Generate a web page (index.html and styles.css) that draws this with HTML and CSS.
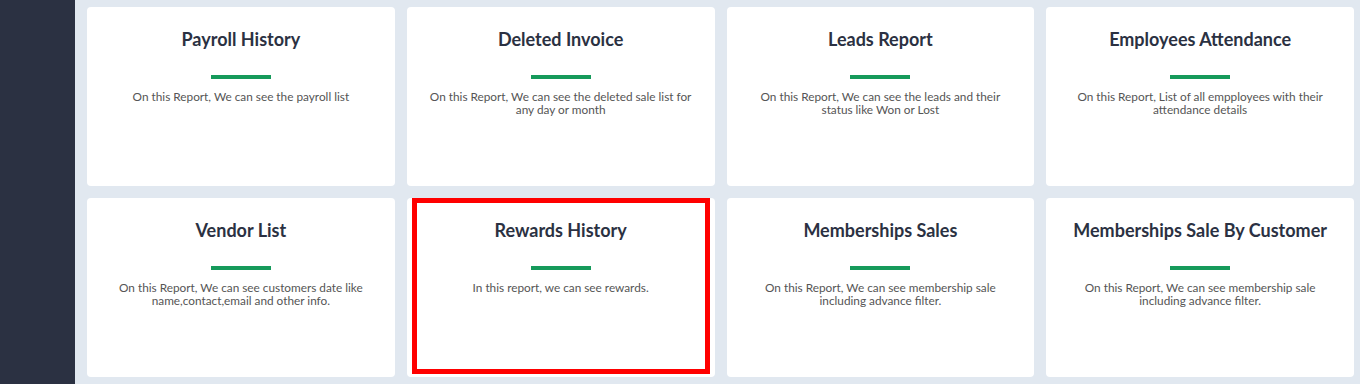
FILE: index.html
```html
<!DOCTYPE html>
<html lang="en">
<head>
    <meta charset="UTF-8">
    <meta name="viewport" content="width=device-width, initial-scale=1.0">
    <title>Reports</title>
    <link rel="stylesheet" href="styles.css">
</head>
<body>
    <div class="layout">
        <aside class="sidebar"></aside>
        <main class="content">
            <div class="report-grid">
                <div class="report-card">
                    <h3>Payroll History</h3>
                    <span class="divider"></span>
                    <p>On this Report, We can see the payroll list</p>
                </div>
                <div class="report-card">
                    <h3>Deleted Invoice</h3>
                    <span class="divider"></span>
                    <p>On this Report, We can see the deleted sale list for any day or month</p>
                </div>
                <div class="report-card">
                    <h3>Leads Report</h3>
                    <span class="divider"></span>
                    <p>On this Report, We can see the leads and their status like Won or Lost</p>
                </div>
                <div class="report-card">
                    <h3>Employees Attendance</h3>
                    <span class="divider"></span>
                    <p>On this Report, List of all empployees with their attendance details</p>
                </div>
                <div class="report-card">
                    <h3>Vendor List</h3>
                    <span class="divider"></span>
                    <p>On this Report, We can see customers date like name,contact,email and other info.</p>
                </div>
                <div class="report-card is-marked">
                    <h3>Rewards History</h3>
                    <span class="divider"></span>
                    <p>In this report, we can see rewards.</p>
                </div>
                <div class="report-card">
                    <h3>Memberships Sales</h3>
                    <span class="divider"></span>
                    <p>On this Report, We can see membership sale including advance filter.</p>
                </div>
                <div class="report-card">
                    <h3>Memberships Sale By Customer</h3>
                    <span class="divider"></span>
                    <p>On this Report, We can see membership sale including advance filter.</p>
                </div>
            </div>
        </main>
    </div>
</body>
</html>
```

FILE: styles.css
```css
:root {
    --font-body: 'Lato', 'Noto Sans', sans-serif;
    --color-bg: #e1e8f0;
    --color-sidebar: #2b3142;
    --color-title: #2b3142;
    --color-text: #555555;
    --color-accent: #169a5b;
    --color-card-bg: #ffffff;
}
html, body {
    margin: 0;
    height: 100%;
}
body {
    font-family: var(--font-body);
    background-color: var(--color-bg);
    overflow: hidden;
}
.layout {
    display: flex;
    height: 100%;
}
.sidebar {
    width: 75px;
    flex-shrink: 0;
    background-color: var(--color-sidebar);
}
.content {
    flex: 1;
    padding: 7px 6px 0 12px;
}

/* レポートカード */
.report-grid {
    display: grid;
    grid-template-columns: repeat(4, 1fr);
    grid-auto-rows: 179px;
    gap: 12px;
}
.report-card {
    position: relative;
    display: flex;
    flex-direction: column;
    align-items: center;
    background: var(--color-card-bg);
    border-radius: 4px;
    padding: 20px 21px 0;
    text-align: center;
}
.report-card h3 {
    margin: 0;
    height: 24px;
    font-size: 18px;
    font-weight: 700;
    line-height: 24px;
    color: var(--color-title);
}
.divider {
    display: block;
    width: 60px;
    height: 4px;
    margin-top: 24px;
    background-color: var(--color-accent);
}
.report-card p {
    margin: 11px 0 0;
    font-size: 11.8px;
    line-height: 13px;
    color: var(--color-text);
}
.report-card.is-marked::after {
    content: "";
    position: absolute;
    top: 0;
    left: 5px;
    right: 5px;
    bottom: 3px;
    border: 5px solid #ff0000;
    pointer-events: none;
}
```
